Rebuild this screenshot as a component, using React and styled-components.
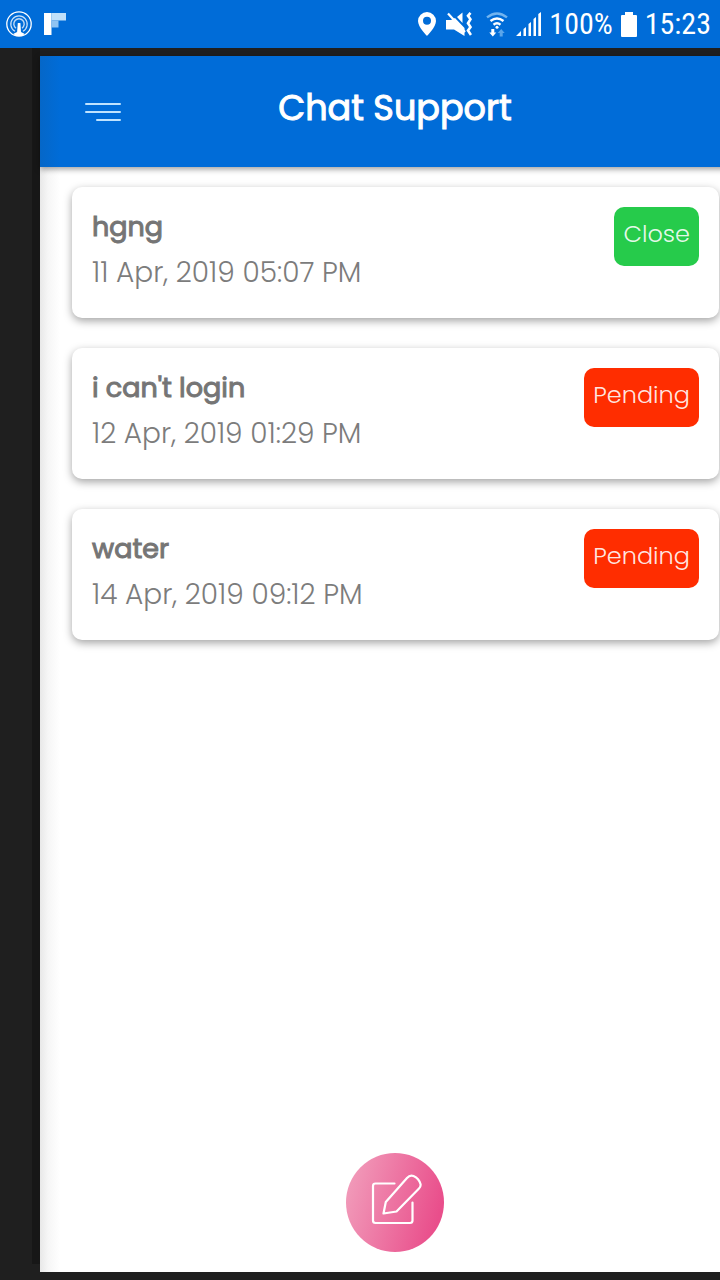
import React from "react";
import styled, { createGlobalStyle } from "styled-components";

const GlobalStyle = createGlobalStyle`
  *, *::before, *::after { box-sizing: border-box; }
  body { margin: 0; background: #1f1f1f; font-family: Poppins, Inter, sans-serif; }
`;

const Screen = styled.div`
  display: flex;
  flex-direction: column;
  min-height: 100vh;
  overflow: hidden;
  background: #1f1f1f;
`;

const StatusBar = styled.div`
  display: flex;
  justify-content: space-between;
  align-items: center;
  height: 48px;
  padding: 0 9px 0 6px;
  background: #006cd8;
  color: #fff;
  font: 400 30px/32px "Roboto Condensed", Roboto, sans-serif;
`;

const StatusGroup = styled.div`
  display: flex;
  align-items: center;
  gap: ${(p) => p.$gap}px;
`;

const Body = styled.div`
  flex: 1;
  display: flex;
  padding: 0 0 8px 32px;
`;

const DrawerEdge = styled.div`
  width: 8px;
  margin-bottom: 8px;
  background: #171717;
`;

const Panel = styled.div`
  flex: 1;
  display: flex;
  flex-direction: column;
  margin: 8px -30px 0 0;
  background: linear-gradient(to right, #e8e8e8, #f6f6f6 8px, #fff 20px);
`;

const Header = styled.header`
  display: grid;
  grid-template-columns: 36px 1fr 36px;
  align-items: center;
  height: 111px;
  padding: 0 45px;
  background: linear-gradient(to right, #0567c8, #006cd8 20px);
  box-shadow: 0 2px 6px rgba(0, 0, 0, 0.4);
`;

const IconButton = styled.button`
  display: flex;
  padding: 0;
  border: 0;
  background: none;
  cursor: pointer;
`;

const Title = styled.h1`
  margin: 0;
  padding-bottom: 8px;
  color: #fff;
  font-size: 35px;
  line-height: 48px;
  font-weight: 400;
  text-align: center;
  -webkit-text-stroke: 1px currentColor;
`;

const Tickets = styled.ul`
  flex: 1;
  display: flex;
  flex-direction: column;
  gap: 30px;
  margin: 0;
  padding: 20px 31px 20px 32px;
  list-style: none;
`;

const Ticket = styled.li`
  display: flex;
  justify-content: space-between;
  align-items: flex-start;
  height: 131px;
  padding: 20px;
  border-radius: 10px;
  background: #fff;
  box-shadow: 0 3px 8px rgba(0, 0, 0, 0.36);
`;

const Subject = styled.h2`
  margin: 0;
  color: #757575;
  font-size: 27px;
  line-height: 40px;
  font-weight: 400;
  -webkit-text-stroke: 1px currentColor;
`;

const Time = styled.time`
  display: block;
  padding-top: 6px;
  color: #7c7c7c;
  font-size: 28px;
  line-height: 40px;
  font-weight: 300;
`;

const Status = styled.span`
  padding: 9px 9px 14px;
  border-radius: 10px;
  background: ${(p) => (p.$closed ? "#26cb4b" : "#ff2d00")};
  color: rgba(255, 255, 255, 0.9);
  font-size: 24px;
  line-height: 36px;
  font-weight: 300;
`;

const Footer = styled.footer`
  display: flex;
  justify-content: center;
  padding-bottom: 20px;
`;

const ComposeButton = styled.button`
  display: flex;
  align-items: center;
  justify-content: center;
  width: 98px;
  height: 99px;
  padding: 0 0 8px 2px;
  border: 0;
  border-radius: 50%;
  background: linear-gradient(105deg, #f19ab9 8%, #e94e8b 88%);
  cursor: pointer;
`;

const tickets = [
  { subject: "hgng", time: "11 Apr, 2019 05:07 PM", status: "Close" },
  { subject: "i can't login", time: "12 Apr, 2019 01:29 PM", status: "Pending" },
  { subject: "water", time: "14 Apr, 2019 09:12 PM", status: "Pending" },
];

const BroadcastIcon = () => (
  <svg width="26" height="28" viewBox="0 0 26 28" fill="none" stroke="#fff">
    <circle cx="13" cy="14" r="12.2" strokeWidth="1.3" />
    <path d="M9 21.2A8.2 8.2 0 1 1 17 21.2" strokeWidth="1.2" opacity=".8" />
    <path d="M10 18.2A5.2 5.2 0 1 1 16 18.2" strokeWidth="1.4" opacity=".75" />
    <path d="M11.8 13h2.6l.6 9 3.5 1.8-2 2.2h-7l-2-2.2 3.6-1.8z" fill="#fff" stroke="none" />
  </svg>
);

const FlipIcon = () => (
  <svg width="22" height="22" viewBox="0 0 22 22">
    <path d="M0 0h7.5v22H0z" fill="#fff" />
    <path d="M7.5 0H22v7.5H7.5z" fill="#bfe0fa" />
    <path d="M7.5 7.5h7v7h-7z" fill="#8fc3f2" />
  </svg>
);

const PinIcon = () => (
  <svg width="18" height="24" viewBox="0 0 18 24">
    <path fillRule="evenodd" fill="#fff" d="M9 0a9 9 0 0 1 9 9c0 6-9 15-9 15S0 15 0 9a9 9 0 0 1 9-9zm0 4.800a4 4 0 1 0 0 8 4 4 0 0 0 0-8z" />
  </svg>
);

const MuteIcon = () => (
  <svg width="26" height="24" viewBox="0 0 26 24">
    <path d="M0 8h5l4-2 9.500 10V24L8 17.500H0zM11 5L16.500 .5V11z" fill="#fff" />
    <path d="M2 1.500L19 20" stroke="#fff" strokeWidth="2.200" />
    <path d="M24.500 .8L22 3.800l2.500 3.500-2.500 4 2.500 3.700-2.500 3.500 3 4.500" fill="none" stroke="#fff" strokeWidth="2.600" />
  </svg>
);

const WifiIcon = () => (
  <svg width="22" height="25" viewBox="0 0 22 25" fill="none" strokeWidth="2.400">
    <path d="M1 5.400Q11-2.600 21 5.400" stroke="#72b4ef" />
    <path d="M4.500 9Q11 4 17.500 9M7.500 12.700Q11 10 14.500 12.700" stroke="#fff" />
    <circle cx="11" cy="15.300" r="1.500" fill="#fff" />
    <path d="M5.300 17h3v3.500h2L6.800 24.500 3.300 20.500h2z" fill="#fff" />
    <path d="M13.700 24.500h3V21h2l-3.500-4-3.500 4h2z" fill="#5aa5ea" />
  </svg>
);

const SignalIcon = () => (
  <svg width="25" height="24" viewBox="0 0 25 24" fill="#fff">
    <path d="M0 24l5-5v5zM7.500 17l2.500-2v9H7.500zM12.500 12l2.500-2v14h-2.500zM17.500 7L20 5v19h-2.500zM22.300 2L25 0v24h-2.700z" />
  </svg>
);

const BatteryIcon = () => (
  <svg width="16" height="25" viewBox="0 0 16 25" fill="#fff">
    <path d="M4 0h8v3h3a1 1 0 0 1 1 1v20a1 1 0 0 1-1 1H1a1 1 0 0 1-1-1V4a1 1 0 0 1 1-1h3z" />
  </svg>
);

const MenuIcon = () => (
  <svg width="36" height="18" viewBox="0 0 36 18" stroke="#bfe3ff" strokeWidth="2" strokeLinecap="round">
    <path d="M1 1h34M1 9h34M12 17h23" />
  </svg>
);

const ComposeIcon = () => (
  <svg width="52" height="52" viewBox="0 0 52 52" fill="none" stroke="#fff" strokeWidth="2.200" strokeLinecap="round" strokeLinejoin="round">
    <path d="M24.500 10.500H5.500Q3 10.500 3 13V47.500Q3 50 5.500 50H40q2.500 0 2.500-2.500V29.500" />
    <path d="M13.500 40.500l2.300-11.500L37 5Q40 1.500 43.500 3 49 5.500 50.500 11 51 13.500 49 15.500L26.500 38.500z" />
  </svg>
);

export default function App() {
  return (
    <Screen>
      <GlobalStyle />
      <StatusBar>
        <StatusGroup $gap={12}>
          <BroadcastIcon />
          <FlipIcon />
        </StatusGroup>
        <StatusGroup $gap={8}>
          <StatusGroup $gap={14}>
            <StatusGroup $gap={10}>
              <PinIcon />
              <MuteIcon />
            </StatusGroup>
            <StatusGroup $gap={8}>
              <WifiIcon />
              <SignalIcon />
            </StatusGroup>
          </StatusGroup>
          <span>100%</span>
          <BatteryIcon />
          <span>15:23</span>
        </StatusGroup>
      </StatusBar>
      <Body>
        <DrawerEdge />
        <Panel>
          <Header>
            <IconButton type="button" aria-label="Menu">
              <MenuIcon />
            </IconButton>
            <Title>Chat Support</Title>
          </Header>
          <Tickets>
            {tickets.map((t) => (
              <Ticket key={t.time}>
                <div>
                  <Subject>{t.subject}</Subject>
                  <Time>{t.time}</Time>
                </div>
                <Status $closed={t.status === "Close"}>{t.status}</Status>
              </Ticket>
            ))}
          </Tickets>
          <Footer>
            <ComposeButton type="button" aria-label="New message">
              <ComposeIcon />
            </ComposeButton>
          </Footer>
        </Panel>
      </Body>
    </Screen>
  );
}
